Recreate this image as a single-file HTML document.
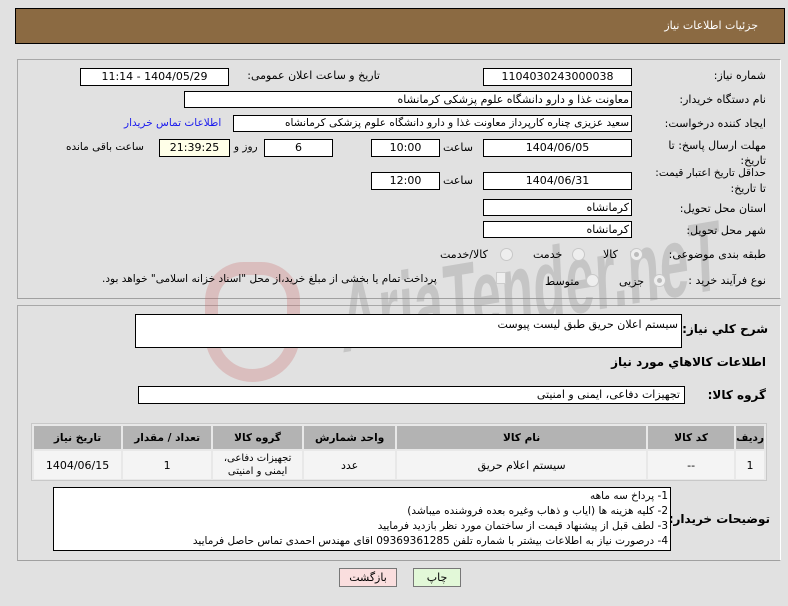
<!DOCTYPE html>
<html><head><meta charset="utf-8"><style>
*{margin:0;padding:0;box-sizing:border-box}
body{width:788px;height:606px;background:#e1e1e1;position:relative;overflow:hidden;font-family:"DejaVu Sans","Liberation Sans",sans-serif;font-size:11px;color:#000;direction:rtl}
.a{position:absolute;white-space:nowrap}
.box{position:absolute;background:#fff;border:1px solid #000;text-align:center;font-size:11px;line-height:16px}
.panel{position:absolute;border:1px solid #a8a8a8;border-right-color:#fff;border-bottom-color:#a0a0a0}
.lbl{position:absolute;white-space:nowrap;font-size:11px}
.b{font-weight:bold}
.radio{position:absolute;width:13px;height:13px;border-radius:50%;border:1px solid #c8c8c8;background:#eee}
table{border-collapse:separate;border-spacing:2px}
</style></head><body>
<div class="a" style="left:15px;top:8px;width:770px;height:36px;background:#8b6a42;border:1px solid #000"></div>
<div class="a" style="right:30px;top:19px;color:#fff;font-size:11px">جزئیات اطلاعات نیاز</div>

<div class="panel" style="left:17px;top:59px;width:764px;height:240px"></div>
<div class="panel" style="left:17px;top:305px;width:764px;height:256px"></div>

<div class="a" style="left:338px;top:262px;font-size:100px;font-weight:bold;color:rgba(140,140,140,0.32);direction:ltr;font-family:'Liberation Sans',sans-serif;transform:scaleX(0.52) rotate(-5deg);transform-origin:left top;letter-spacing:1px">AriaTender.neT</div>
<div class="a" style="left:205px;top:262px;width:95px;height:120px;border:13px solid rgba(200,100,100,0.28);border-radius:45px 45px 55px 55px"></div>

<div class="lbl" style="right:22px;top:69px">شماره نیاز:</div>
<div class="box" style="left:483px;top:68px;width:149px;height:18px">1104030243000038</div>
<div class="lbl" style="left:234px;top:69px;width:146px;text-align:right">تاریخ و ساعت اعلان عمومی:</div>
<div class="box" style="left:80px;top:68px;width:149px;height:18px">1404/05/29 - 11:14</div>

<div class="lbl" style="right:22px;top:93px">نام دستگاه خریدار:</div>
<div class="box" style="left:184px;top:91px;width:448px;height:17px;text-align:right;padding-right:2px;line-height:15px">معاونت غذا و دارو دانشگاه علوم پزشکی کرمانشاه</div>

<div class="lbl" style="right:22px;top:117px">ایجاد کننده درخواست:</div>
<div class="box" style="left:233px;top:115px;width:399px;height:17px;text-align:right;padding-right:2px;line-height:15px;font-size:10.5px">سعید عزیزی چناره کارپرداز معاونت غذا و دارو دانشگاه علوم پزشکی کرمانشاه</div>
<div class="lbl" style="left:124px;top:117px;color:#1a1aee;font-size:10.5px">اطلاعات تماس خریدار</div>

<div class="lbl" style="right:22px;top:139px">مهلت ارسال پاسخ: تا</div>
<div class="lbl" style="right:22px;top:154px">تاریخ:</div>
<div class="box" style="left:483px;top:139px;width:149px;height:18px">1404/06/05</div>
<div class="lbl" style="left:443px;top:141px">ساعت</div>
<div class="box" style="left:371px;top:139px;width:69px;height:18px">10:00</div>
<div class="box" style="left:264px;top:139px;width:69px;height:18px">6</div>
<div class="lbl" style="left:234px;top:141px;font-size:10.5px">روز و</div>
<div class="box" style="left:159px;top:139px;width:71px;height:18px;background:#ffffe8">21:39:25</div>
<div class="lbl" style="left:66px;top:141px;font-size:10.5px">ساعت باقی مانده</div>

<div class="lbl" style="right:22px;top:167px;font-size:10.5px">حداقل تاریخ اعتبار قیمت:</div>
<div class="lbl" style="right:22px;top:182px">تا تاریخ:</div>
<div class="box" style="left:483px;top:172px;width:149px;height:18px">1404/06/31</div>
<div class="lbl" style="left:443px;top:174px">ساعت</div>
<div class="box" style="left:371px;top:172px;width:69px;height:18px">12:00</div>

<div class="lbl" style="right:22px;top:202px">استان محل تحویل:</div>
<div class="box" style="left:483px;top:199px;width:149px;height:17px;text-align:right;padding-right:2px;line-height:15px">کرمانشاه</div>
<div class="lbl" style="right:22px;top:224px">شهر محل تحویل:</div>
<div class="box" style="left:483px;top:221px;width:149px;height:17px;text-align:right;padding-right:2px;line-height:15px">کرمانشاه</div>

<div class="lbl" style="right:22px;top:248px">طبقه بندی موضوعی:</div>
<div class="radio" style="left:630px;top:248px"><div style="margin:3px;width:5px;height:5px;border-radius:50%;background:#bbb"></div></div>
<div class="lbl" style="left:603px;top:248px">کالا</div>
<div class="radio" style="left:572px;top:248px"></div>
<div class="lbl" style="left:533px;top:248px">خدمت</div>
<div class="radio" style="left:500px;top:248px"></div>
<div class="lbl" style="left:440px;top:248px">کالا/خدمت</div>

<div class="lbl" style="right:22px;top:274px">نوع فرآیند خرید :</div>
<div class="radio" style="left:653px;top:274px"><div style="margin:3px;width:5px;height:5px;border-radius:50%;background:#bbb"></div></div>
<div class="lbl" style="left:619px;top:275px">جزیی</div>
<div class="radio" style="left:586px;top:274px"></div>
<div class="lbl" style="left:545px;top:275px">متوسط</div>
<div class="a" style="left:496px;top:272px;width:10px;height:12px;border:1px solid #ccc;background:#eee"></div>
<div class="lbl" style="left:102px;top:273px;font-size:10.5px">پرداخت تمام یا بخشی از مبلغ خرید،از محل "اسناد خزانه اسلامی" خواهد بود.</div>

<div class="lbl b" style="right:20px;top:322px;font-size:12px">شرح کلي نياز:</div>
<div class="box" style="left:135px;top:314px;width:547px;height:34px;text-align:right;padding-right:3px;padding-top:2px">سیستم اعلان حریق طبق لیست پیوست</div>
<div class="lbl b" style="right:22px;top:355px;font-size:12px">اطلاعات کالاهاي مورد نياز</div>
<div class="lbl b" style="right:22px;top:388px;font-size:12px">گروه کالا:</div>
<div class="box" style="left:138px;top:386px;width:547px;height:18px;text-align:right;padding-right:4px">تجهیزات دفاعی، ایمنی و امنیتی</div>

<div class="a" style="left:31px;top:423px;width:736px;height:58px;background:#e8e8e8;border:1px solid #c8c8c8"></div>
<div class="a" style="left:32px;top:424px">
<table style="width:734px;direction:rtl;font-size:10.5px;text-align:center">
<tr style="background:#b3b3b3;font-weight:bold;height:23px">
<td style="width:26px">رديف</td><td style="width:86px">کد کالا</td><td style="width:249px">نام کالا</td><td style="width:91px">واحد شمارش</td><td style="width:89px">گروه کالا</td><td style="width:88px">تعداد / مقدار</td><td>تاريخ نياز</td></tr>
<tr style="background:#f4f4f4;height:28px;font-size:11px">
<td>1</td><td>--</td><td>سیستم اعلام حریق</td><td>عدد</td><td style="font-size:10px;line-height:13px">تجهیزات دفاعی،<br>ایمنی و امنیتی</td><td>1</td><td>1404/06/15</td></tr>
</table></div>

<div class="lbl b" style="right:18px;top:512px;font-size:12px">توضیحات خریدار:</div>
<div class="box" style="left:53px;top:487px;width:618px;height:64px;text-align:right;padding-right:2px;line-height:15px;padding-top:1px;font-size:10.5px">1- پرداخ سه ماهه<br>2- کلیه هزینه ها (ایاب و ذهاب وغیره بعده فروشنده میباشد)<br>3- لطف قبل از پیشنهاد قیمت از ساختمان مورد نظر بازدید فرمایید<br>4- درصورت نیاز به اطلاعات بیشتر با شماره تلفن 09369361285 اقای مهندس احمدی تماس حاصل فرمایید</div>

<div class="a" style="left:339px;top:568px;width:58px;height:19px;background:#fadede;border:1px solid #777;text-align:center;line-height:17px">بازگشت</div>
<div class="a" style="left:413px;top:568px;width:48px;height:19px;background:#e2f8d8;border:1px solid #777;text-align:center;line-height:17px">چاپ</div>
</body></html>
